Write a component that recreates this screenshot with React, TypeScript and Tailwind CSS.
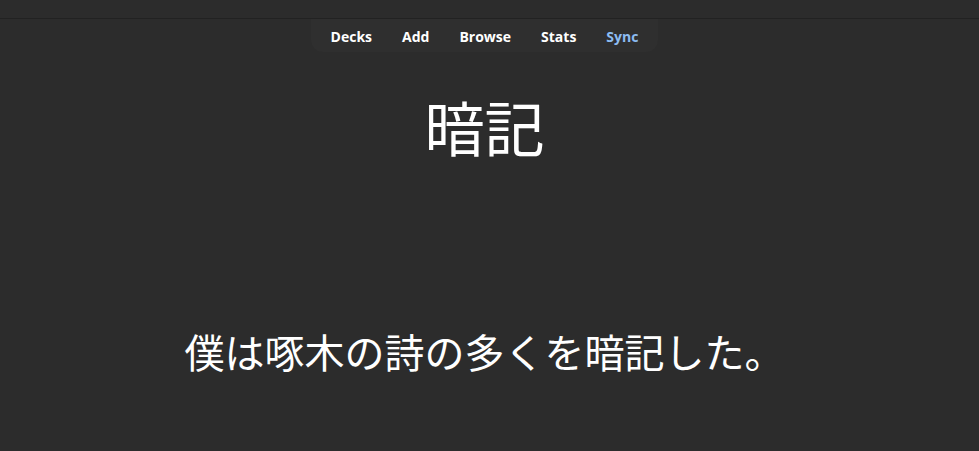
const navItems = ["Decks", "Add", "Browse", "Stats", "Sync"];

const NavBar = () => (
  <nav className="flex justify-center">
    <div className="flex items-center rounded-b-xl bg-[#2f2f2f] px-[5px] pt-[2px] h-[33px]">
      {navItems.map((item) => (
        <span
          key={item}
          className={`px-[15px] text-[14px] font-bold ${item === "Sync" ? "text-[#8cbcf2]" : "text-white"}`}
        >
          {item}
        </span>
      ))}
    </div>
  </nav>
);

export default function App() {
  return (
    <div
      className="w-[979px] h-[451px] bg-[#2c2c2c] overflow-hidden"
      style={{ fontFamily: '"Open Sans", "Noto Sans CJK JP", sans-serif' }}
    >
      <div className="h-[19px] border-b border-[#222222]" />
      <div className="w-[969px]">
        <NavBar />
        <div className="flex flex-col items-center text-white" style={{ fontFamily: '"Noto Sans CJK JP", sans-serif' }}>
          <h1 className="mt-[39px] text-[60px] leading-[70px]">暗記</h1>
          <p className="mt-[165px] text-[40px] leading-[50px]">僕は啄木の詩の多くを暗記した。</p>
        </div>
      </div>
    </div>
  );
}
